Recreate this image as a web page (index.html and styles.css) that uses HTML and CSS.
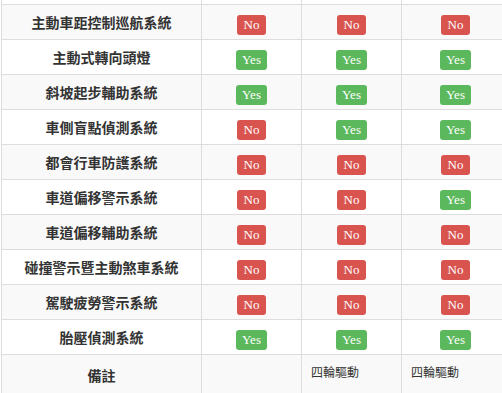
FILE: index.html
```html
<!DOCTYPE html>
<html lang="zh-Hant">
<head>
<meta charset="utf-8">
<link rel="stylesheet" href="styles.css">
</head>
<body>
<div class="frame">
<table class="spec">
<tbody>
<tr class="alt"><th></th><td></td><td></td><td></td></tr>
<tr class="odd"><th>主動車距控制巡航系統</th><td><span class="badge no">No</span></td><td><span class="badge no">No</span></td><td><span class="badge no">No</span></td></tr>
<tr class="alt"><th>主動式轉向頭燈</th><td><span class="badge yes">Yes</span></td><td><span class="badge yes">Yes</span></td><td><span class="badge yes">Yes</span></td></tr>
<tr class="odd"><th>斜坡起步輔助系統</th><td><span class="badge yes">Yes</span></td><td><span class="badge yes">Yes</span></td><td><span class="badge yes">Yes</span></td></tr>
<tr class="alt"><th>車側盲點偵測系統</th><td><span class="badge no">No</span></td><td><span class="badge yes">Yes</span></td><td><span class="badge yes">Yes</span></td></tr>
<tr class="odd"><th>都會行車防護系統</th><td><span class="badge no">No</span></td><td><span class="badge no">No</span></td><td><span class="badge no">No</span></td></tr>
<tr class="alt"><th>車道偏移警示系統</th><td><span class="badge no">No</span></td><td><span class="badge no">No</span></td><td><span class="badge yes">Yes</span></td></tr>
<tr class="odd"><th>車道偏移輔助系統</th><td><span class="badge no">No</span></td><td><span class="badge no">No</span></td><td><span class="badge no">No</span></td></tr>
<tr class="alt"><th>碰撞警示暨主動煞車系統</th><td><span class="badge no">No</span></td><td><span class="badge no">No</span></td><td><span class="badge no">No</span></td></tr>
<tr class="odd"><th>駕駛疲勞警示系統</th><td><span class="badge no">No</span></td><td><span class="badge no">No</span></td><td><span class="badge no">No</span></td></tr>
<tr class="alt"><th>胎壓偵測系統</th><td><span class="badge yes">Yes</span></td><td><span class="badge yes">Yes</span></td><td><span class="badge yes">Yes</span></td></tr>
<tr class="odd note"><th>備註</th><td></td><td class="memo">四輪驅動</td><td class="memo">四輪驅動</td></tr>
</tbody>
</table>
</div>
</body>
</html>
```
FILE: styles.css
```css
html, body {
  margin: 0;
  padding: 0;
  background: #fff;
}
.frame {
  width: 502px;
  height: 393px;
  overflow: hidden;
  position: relative;
}
.spec {
  border-collapse: collapse;
  table-layout: fixed;
  width: 508px;
  margin: -31px 0 0 1px;
  font-family: "Noto Sans CJK TC", "Noto Sans", sans-serif;
  color: #333;
}
.spec th, .spec td {
  box-sizing: border-box;
  border: 1px solid #ddd;
  height: 35px;
  padding: 0 8px;
  text-align: center;
  vertical-align: middle;
}
.spec tr > :nth-child(1) { width: 200px; }
.spec tr > :nth-child(2) { width: 100px; }
.spec tr > :nth-child(3) { width: 100px; }
.spec tr > :nth-child(4) { width: 108px; }
.spec th {
  font-size: 14px;
  font-weight: 700;
  line-height: 18px;
}
.spec tr.odd { background: #f9f9f9; }
.spec tr.alt { background: #fff; }
.badge {
  display: inline-block;
  height: 20px;
  line-height: 20px;
  padding: 0 6.5px;
  margin-top: 2px;
  border-radius: 3px;
  color: #fff;
  font-family: "Liberation Serif", serif;
  font-size: 13px;
  vertical-align: middle;
}
.badge.no { background: #d9534f; }
.badge.yes { background: #5cb85c; }
.spec tr.note th, .spec tr.note td { height: 40px; }
.spec td.memo {
  text-align: left;
  vertical-align: top;
  padding: 8px 8px 0 9px;
  font-size: 12px;
  line-height: 18px;
}
```
